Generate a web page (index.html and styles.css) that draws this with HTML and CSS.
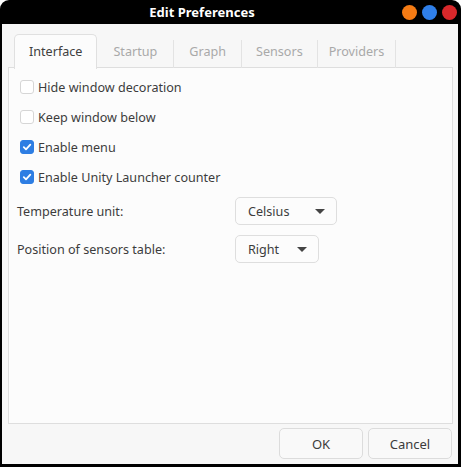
FILE: index.html
```html
<!DOCTYPE html>
<html lang="en">
<head>
  <meta charset="UTF-8">
  <title>Edit Preferences</title>
  <link rel="stylesheet" href="styles.css">
</head>
<body>
  <div class="window">
    <div class="titlebar">
      <span class="title">Edit Preferences</span>
      <div class="controls">
        <span class="dot orange"></span>
        <span class="dot blue"></span>
        <span class="dot red"></span>
      </div>
    </div>
    <div class="content">
      <div class="tabs">
        <div class="tab active">Interface</div>
        <div class="tab">Startup</div>
        <div class="tab">Graph</div>
        <div class="tab">Sensors</div>
        <div class="tab">Providers</div>
      </div>
      <div class="panel">
        <label class="check"><span class="box"></span>Hide window decoration</label>
        <label class="check"><span class="box"></span>Keep window below</label>
        <label class="check"><span class="box on"><svg width="10" height="10" viewBox="0 0 10 10"><path d="M1.8 5.2 L4 7.3 L8.3 2.6" fill="none" stroke="#fff" stroke-width="1.8" stroke-linecap="round" stroke-linejoin="round"/></svg></span>Enable menu</label>
        <label class="check"><span class="box on"><svg width="10" height="10" viewBox="0 0 10 10"><path d="M1.8 5.2 L4 7.3 L8.3 2.6" fill="none" stroke="#fff" stroke-width="1.8" stroke-linecap="round" stroke-linejoin="round"/></svg></span>Enable Unity Launcher counter</label>

        <div class="field">
          <span class="field-label">Temperature unit:</span>
          <div class="combo wide">Celsius<span class="arrow"></span></div>
        </div>
        <div class="field">
          <span class="field-label">Position of sensors table:</span>
          <div class="combo">Right<span class="arrow"></span></div>
        </div>
      </div>
      <div class="actions">
        <button class="btn">OK</button>
        <button class="btn">Cancel</button>
      </div>
    </div>
  </div>
</body>
</html>
```

FILE: styles.css
```css
body {
  margin: 0;
  background: #fff;
  font-family: "Noto Sans", "Open Sans", sans-serif;
  font-size: 12.6px;
  color: #3c3c3c;
}

.window {
  width: 461px;
  height: 467px;
  background: #000;
  border-radius: 9px 9px 0 0;
  display: flex;
  flex-direction: column;
}

.titlebar {
  height: 24px;
  position: relative;
  display: flex;
  align-items: center;
  justify-content: center;
}

.title {
  color: #fff;
  font-weight: bold;
  font-size: 13px;
  margin-left: -57px;
}

.controls {
  position: absolute;
  right: 4px;
  top: 5px;
  display: flex;
  gap: 5px;
}

.dot {
  width: 15px;
  height: 15px;
  border-radius: 50%;
}

.orange { background: #f47b14; }
.blue { background: #2f7fe9; }
.red { background: #d8282b; }

.content {
  flex: 1;
  margin: 0 3px 3px 2px;
  background: #f7f7f7;
  padding: 10px 5px 0 6px;
  display: flex;
  flex-direction: column;
}

.tabs {
  display: flex;
  padding-left: 6px;
  height: 34px;
  position: relative;
  z-index: 1;
}

.tab {
  color: #a9a9a9;
  border-right: 1px solid #e3e3e3;
  margin-top: 6px;
  line-height: 23px;
  height: 28px;
  box-sizing: border-box;
}

.tab:nth-child(2) { padding: 0 16px 0 16px; }
.tab:nth-child(3) { padding: 0 15px 0 15px; }
.tab:nth-child(4) { padding: 0 14px 0 14px; }
.tab:nth-child(5) { padding: 0 11px 0 11px; }

.tab.active {
  margin-top: 0;
  height: 35px;
  line-height: 34px;
  padding: 0 14px 0 14px;
  color: #404040;
  background: #fcfcfc;
  border: 1px solid #e0e0e0;
  border-bottom: none;
  border-radius: 5px 5px 0 0;
}

.panel {
  margin-top: -1px;
  height: 357px;
  box-sizing: border-box;
  background: #fcfcfc;
  border: 1px solid #dedede;
  padding: 4px 0 0 11px;
}

.check {
  display: flex;
  align-items: center;
  height: 30px;
  color: #3c3c3c;
}

.box {
  width: 12px;
  height: 12px;
  border: 1px solid #d6d6d6;
  border-radius: 3px;
  background: #fff;
  margin-right: 4px;
  display: flex;
  align-items: center;
  justify-content: center;
}

.box.on {
  background: #2e7ee3;
  border-color: #2e7ee3;
}

.field {
  display: flex;
  align-items: center;
  margin-left: -3px;
  height: 38px;
}

.field-label {
  width: 218px;
}

.combo {
  height: 28px;
  box-sizing: border-box;
  border: 1px solid #dedede;
  border-radius: 5px;
  background: #fcfcfc;
  display: flex;
  align-items: center;
  padding-left: 12px;
  width: 84px;
  position: relative;
}

.combo.wide {
  width: 102px;
}

.arrow {
  position: absolute;
  right: 11px;
  top: 11px;
  border-left: 5px solid transparent;
  border-right: 5px solid transparent;
  border-top: 5px solid #444;
}

.actions {
  display: flex;
  justify-content: flex-end;
  gap: 5px;
  padding: 4px 1px 0 0;
}

.btn {
  width: 84px;
  height: 31px;
  font-family: inherit;
  font-size: 13px;
  color: #3c3c3c;
  background: #f9f9f9;
  border: 1px solid #dcdcdc;
  border-radius: 5px;
}
```
